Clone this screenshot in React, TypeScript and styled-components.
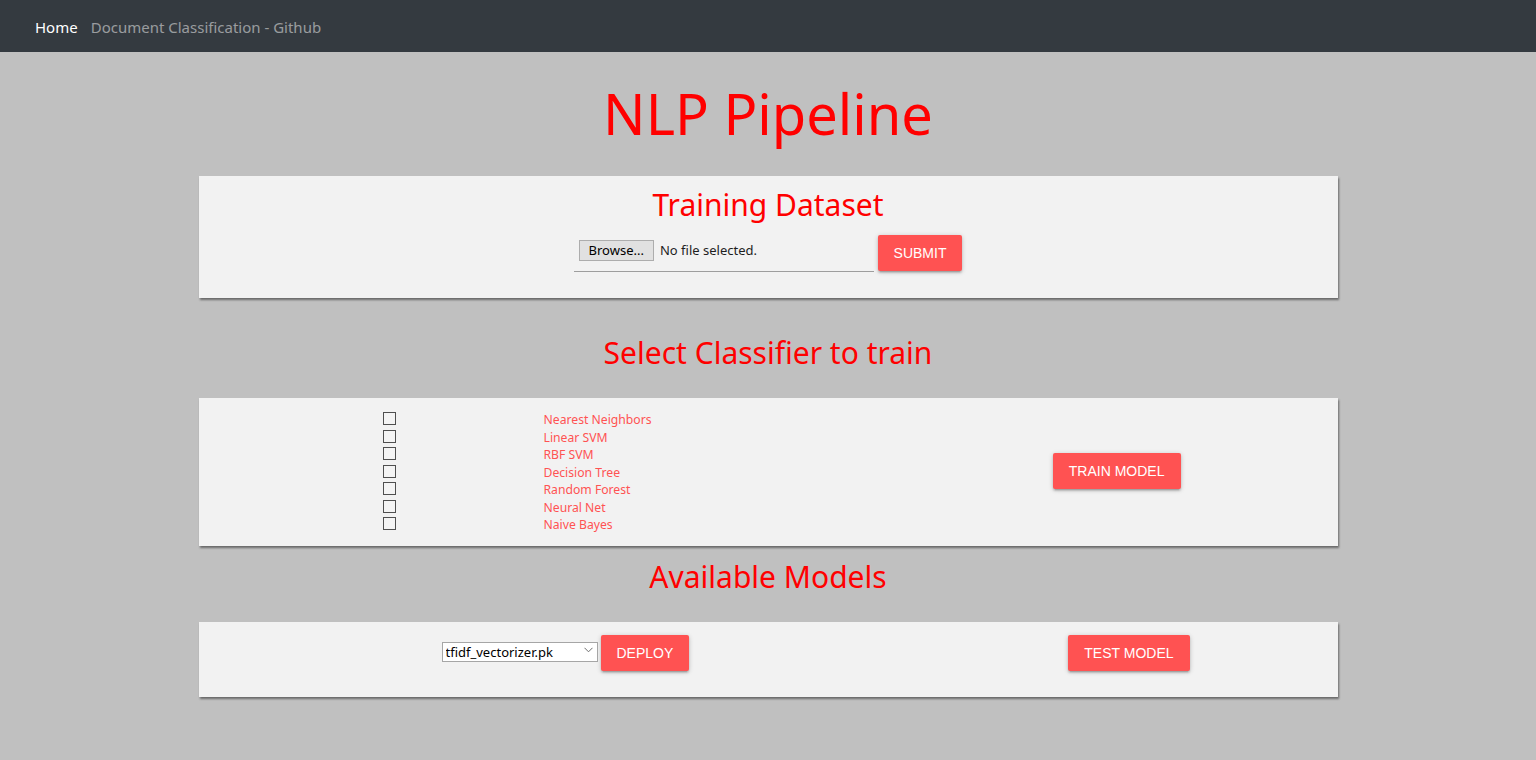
import React from "react";
import styled, { createGlobalStyle } from "styled-components";

const GlobalStyle = createGlobalStyle`
  html, body {
    margin: 0;
    padding: 0;
    background: #c0c0c0;
    font-family: "Noto Sans", "DejaVu Sans", sans-serif;
  }
  * { box-sizing: border-box; }
`;

const Navbar = styled.nav`
  height: 52px;
  background: #343a40;
  display: flex;
  align-items: center;
  padding-left: 35px;
  gap: 13px;
`;

const NavLink = styled.a<{ $active?: boolean }>`
  font-size: 15px;
  color: ${(p) => (p.$active ? "#ffffff" : "rgba(255,255,255,0.5)")};
  text-decoration: none;
  line-height: 20px;
  padding-top: 1px;
`;

const Container = styled.main`
  width: 1139px;
  margin: 0 auto;
  padding-bottom: 40px;
`;

const Title = styled.h1`
  margin: 28px 0 29px;
  text-align: center;
  color: #ff0000;
  font-size: 56px;
  font-weight: 400;
  line-height: 67px;
`;

const Heading = styled.h2<{ $top?: number; $bottom?: number }>`
  margin: ${(p) => p.$top ?? 0}px 0 ${(p) => p.$bottom ?? 0}px;
  text-align: center;
  color: #ff0000;
  font-size: 30px;
  font-weight: 400;
  line-height: 38px;
`;

const Card = styled.section<{ $pt: number; $pb: number }>`
  background: #f2f2f2;
  box-shadow: 1px 2px 2px rgba(0, 0, 0, 0.45);
  padding: ${(p) => p.$pt}px 0 ${(p) => p.$pb}px;
`;

const UploadRow = styled.form`
  display: flex;
  justify-content: center;
  align-items: flex-start;
  gap: 4px;
  margin-top: 11px;
`;

const FileField = styled.div`
  width: 300px;
  height: 37px;
  border-bottom: 1px solid #9e9e9e;
  display: flex;
  align-items: flex-start;
  padding-left: 5px;
  padding-top: 5px;
  font-family: "Noto Sans", sans-serif;
  font-size: 13px;
  line-height: 20px;
  color: #1e1e1e;
`;

const BrowseButton = styled.button`
  height: 21px;
  padding: 0 9px;
  background: #e1e1e1;
  border: 1px solid #adadad;
  border-radius: 0;
  font-family: "Noto Sans", sans-serif;
  font-size: 13px;
  color: #000;
  line-height: 17px;
  margin-right: 6px;
`;

const Button = styled.button`
  height: 36px;
  padding: 0 16px;
  background: #ff5252;
  color: #fff;
  border: none;
  border-radius: 2px;
  font-family: "Liberation Sans", Arial, sans-serif;
  font-size: 14px;
  text-transform: uppercase;
  box-shadow: 0 2px 2px 0 rgba(0, 0, 0, 0.14), 0 3px 1px -2px rgba(0, 0, 0, 0.12),
    0 1px 5px 0 rgba(0, 0, 0, 0.2);
  cursor: pointer;
`;

const ClassifierRow = styled.div`
  display: flex;
  align-items: center;
  padding-left: 184px;
  padding-right: 157px;
`;

const OptionGrid = styled.div`
  display: grid;
  grid-template-columns: 161px auto;
  grid-auto-rows: 17.5px;
  align-items: center;
`;

const Check = styled.input`
  appearance: none;
  width: 13px;
  height: 13px;
  margin: 0;
  border: 1px solid #4f4f4f;
  background: #f4f4f4;
  border-radius: 0;
`;

const OptionLabel = styled.label`
  font-size: 12.2px;
  color: #ff5252;
  line-height: 17px;
  padding-top: 2px;
`;

const Spacer = styled.div`
  flex: 1;
`;

const ModelRow = styled.div`
  display: flex;
  align-items: flex-start;
  padding-left: 243px;
  padding-right: 148px;
`;

const SelectWrap = styled.div`
  position: relative;
  width: 156px;
  height: 20px;
  margin-top: 5px;
  margin-right: 3px;
`;

const Select = styled.select`
  appearance: none;
  width: 100%;
  height: 100%;
  border: 1px solid #a6a6a6;
  background: #fff;
  border-radius: 0;
  padding: 0 18px 0 3px;
  font-family: "Noto Sans", sans-serif;
  font-size: 13px;
  color: #000;
  outline: none;
`;

const Chevron = styled.svg`
  position: absolute;
  right: 5px;
  top: 7px;
  pointer-events: none;
`;

const classifiers = [
  "Nearest Neighbors",
  "Linear SVM",
  "RBF SVM",
  "Decision Tree",
  "Random Forest",
  "Neural Net",
  "Naive Bayes",
];

export default function App() {
  return (
    <>
      <GlobalStyle />
      <Navbar>
        <NavLink $active href="#">Home</NavLink>
        <NavLink href="#">Document Classification - Github</NavLink>
      </Navbar>
      <Container>
        <Title>NLP Pipeline</Title>
        <Card $pt={10} $pb={26}>
          <Heading>Training Dataset</Heading>
          <UploadRow onSubmit={(e) => e.preventDefault()}>
            <FileField>
              <BrowseButton type="button">Browse...</BrowseButton>
              No file selected.
            </FileField>
            <Button type="submit">Submit</Button>
          </UploadRow>
        </Card>
        <Heading $top={36} $bottom={26}>Select Classifier to train</Heading>
        <Card $pt={12} $pb={13}>
          <ClassifierRow>
            <OptionGrid>
              {classifiers.map((c, i) => (
                <React.Fragment key={c}>
                  <Check type="checkbox" id={`clf-${i}`} />
                  <OptionLabel htmlFor={`clf-${i}`}>{c}</OptionLabel>
                </React.Fragment>
              ))}
            </OptionGrid>
            <Spacer />
            <Button type="button">Train Model</Button>
          </ClassifierRow>
        </Card>
        <Heading $top={12} $bottom={26}>Available Models</Heading>
        <Card $pt={13} $pb={26}>
          <ModelRow>
            <SelectWrap>
              <Select defaultValue="tfidf_vectorizer.pk">
                <option>tfidf_vectorizer.pk</option>
              </Select>
              <Chevron width="9" height="6" viewBox="0 0 9 6">
                <path d="M0.5 0.8 L4.5 4.8 L8.5 0.8" fill="none" stroke="#6d6d6d" strokeWidth="1" />
              </Chevron>
            </SelectWrap>
            <Button type="button">Deploy</Button>
            <Spacer />
            <Button type="button">Test Model</Button>
          </ModelRow>
        </Card>
      </Container>
    </>
  );
}
